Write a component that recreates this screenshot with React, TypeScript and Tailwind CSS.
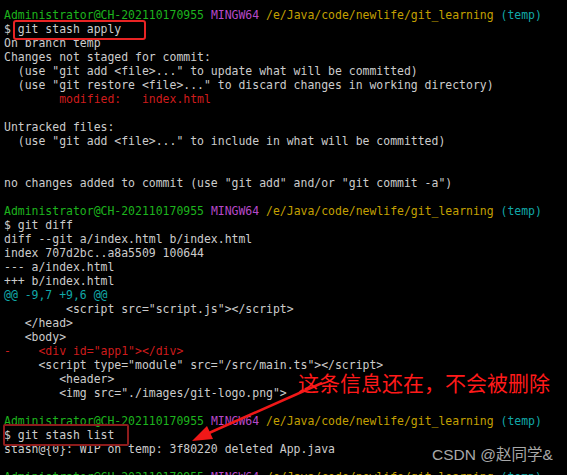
const G = "text-[#1db41d]";
const M = "text-[#b648c8]";
const Y = "text-[#c4a000]";
const C = "text-[#11a8a8]";
const R = "text-[#cf1c1c]";

type Seg = [string, string?];

const prompt: Seg[] = [
  ["Administrator@CH-202110170955", G],
  [" "],
  ["MINGW64", M],
  [" "],
  ["/e/Java/code/newlife/git_learning", Y],
  [" "],
  ["(temp)", C],
];

const lines: Seg[][] = [
  prompt,
  [["$ git stash apply"]],
  [["On branch temp"]],
  [["Changes not staged for commit:"]],
  [['  (use "git add <file>..." to update what will be committed)']],
  [['  (use "git restore <file>..." to discard changes in working directory)']],
  [["        "], ["modified:   index.html", R]],
  [],
  [["Untracked files:"]],
  [['  (use "git add <file>..." to include in what will be committed)']],
  [],
  [],
  [['no changes added to commit (use "git add" and/or "git commit -a")']],
  [],
  prompt,
  [["$ git diff"]],
  [["diff --git a/index.html b/index.html"]],
  [["index 707d2bc..a8a5509 100644"]],
  [["--- a/index.html"]],
  [["+++ b/index.html"]],
  [["@@ -9,7 +9,6 @@", C]],
  [['         <script src="script.js"></script>']],
  [["   </head>"]],
  [["   <body>"]],
  [['-    <div id="app1"></div>', R]],
  [['     <script type="module" src="/src/main.ts"></script>']],
  [["        <header>"]],
  [['        <img src="./images/git-logo.png">']],
  [],
  prompt,
  [["$ git stash list"]],
  [["stash@{0}: WIP on temp: 3f80220 deleted App.java"]],
  [],
  prompt,
];

export default function App() {
  return (
    <div className="relative w-[567px] h-[475px] overflow-hidden bg-black">
      <div
        className="pl-[4px] pt-[8px] text-[11.46px] text-[#cccccc] whitespace-pre"
        style={{ fontFamily: '"DejaVu Sans Mono", monospace' }}
      >
        {lines.map((line, i) => (
          <div key={i} className="h-[14px] leading-[14px]">
            {line.map(([t, c], j) => (
              <span key={j} className={c}>
                {t}
              </span>
            ))}
          </div>
        ))}
      </div>

      {/* annotation boxes */}
      <div className="absolute left-[13px] top-[20px] w-[133px] h-[20px] border-2 border-[#e82424] rounded-[3px]" />
      <div className="absolute left-[3px] top-[424px] w-[126px] h-[22px] border-2 border-[#8e1c1c] rounded-[2px]" />

      <svg className="absolute left-0 top-0" width="567" height="475">
        <line x1="322" y1="383" x2="209" y2="433" stroke="#f01818" strokeWidth="2.5" />
        <polygon points="192,441 213,439 207,426" fill="#f01818" />
      </svg>

      <div
        className="absolute left-[298px] top-[372px] text-[21px] leading-none text-[#ff1a1a] whitespace-nowrap"
        style={{ fontFamily: '"Noto Sans CJK SC", sans-serif' }}
      >
        这条信息还在，不会被删除
      </div>

      <div
        className="absolute left-[432px] top-[447px] text-[15.5px] leading-none text-[#a8a8a8] whitespace-nowrap"
        style={{ fontFamily: '"Liberation Sans", "Noto Sans CJK SC", sans-serif' }}
      >
        CSDN @赵同学&amp;
      </div>
    </div>
  );
}
